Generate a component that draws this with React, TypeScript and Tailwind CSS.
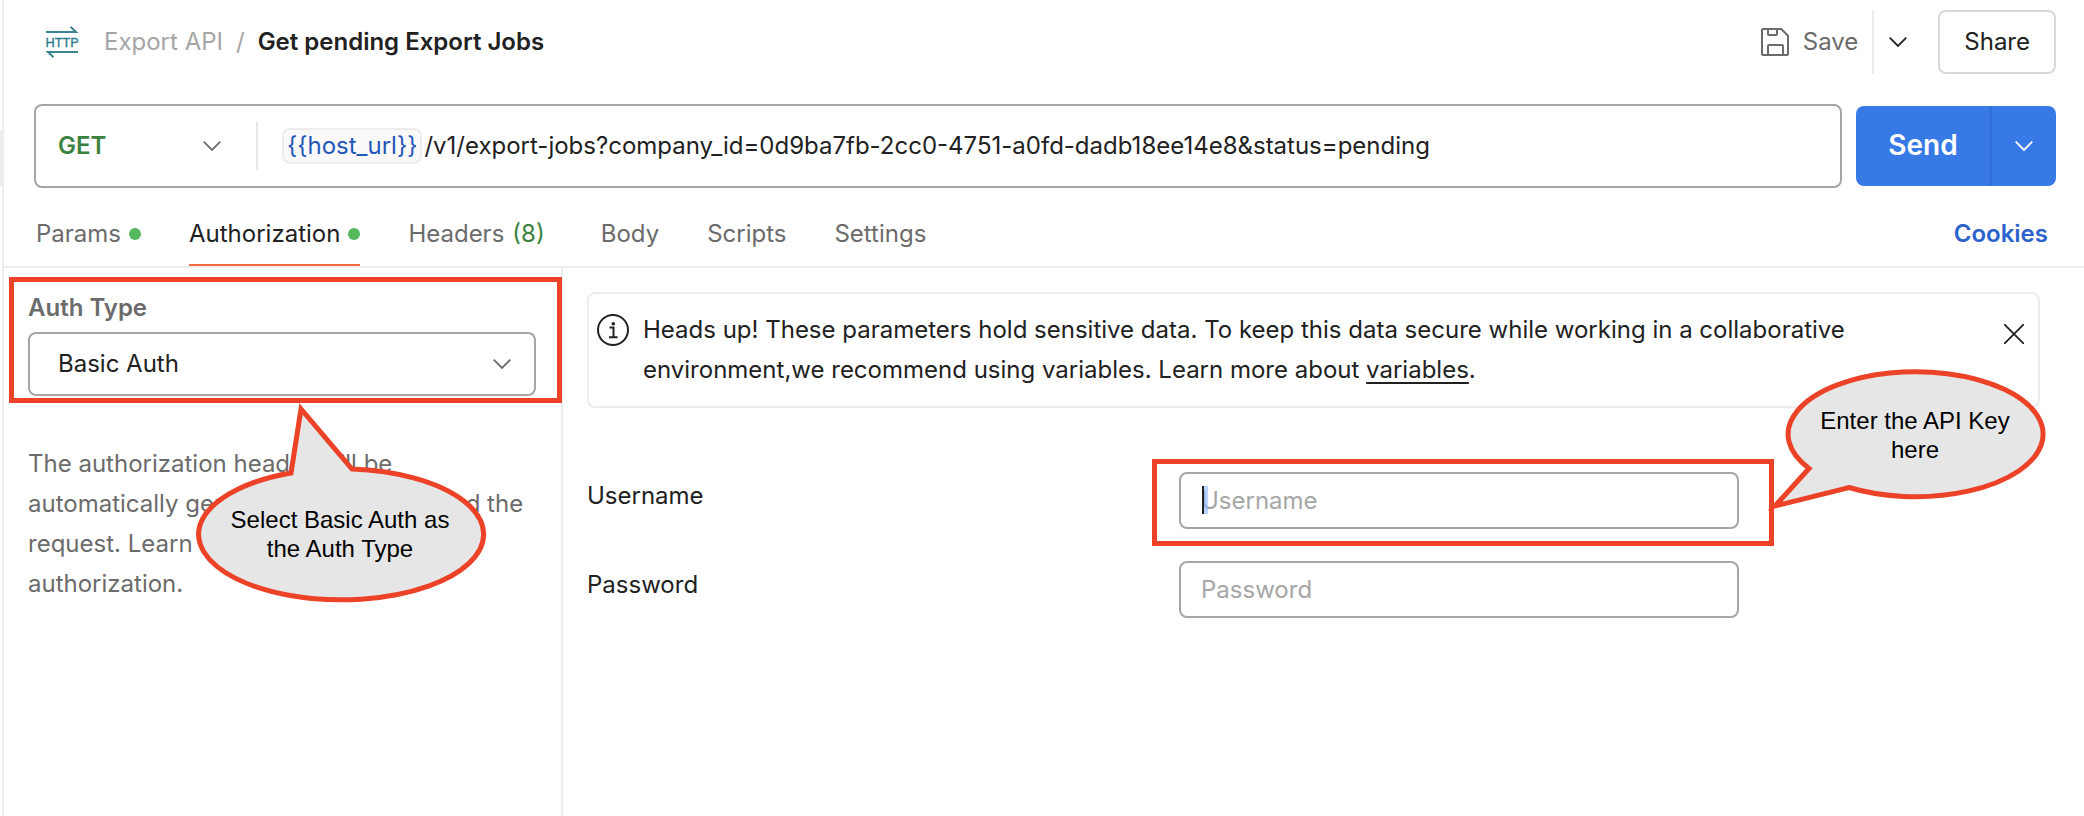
import { useState } from "react";
import type { ReactNode } from "react";

interface Tab {
  label: string;
  dot?: boolean;
  count?: number;
  className: string;
}

const tabs: Tab[] = [
  { label: "Params", dot: true, className: "mr-12" },
  { label: "Authorization", dot: true, className: "mr-12" },
  { label: "Headers", count: 8, className: "mr-14" },
  { label: "Body", className: "mr-12" },
  { label: "Scripts", className: "mr-12" },
  { label: "Settings", className: "" },
];

function Chevron({ className }: { className?: string }) {
  return (
    <svg
      viewBox="0 0 20 12"
      className={`h-3 w-5 shrink-0 ${className ?? ""}`}
      fill="none"
      stroke="currentColor"
      strokeWidth="1.8"
      aria-hidden="true"
    >
      <path d="M1.7 1.7 10 10l8.3-8.3" />
    </svg>
  );
}

function HttpIcon() {
  return (
    <svg viewBox="0 0 34 32" className="h-8 w-[34px] shrink-0 overflow-visible" aria-hidden="true">
      <g fill="none" stroke="#3b8393" strokeWidth="2">
        <path d="M1 6H31L25.5 .8" />
        <path d="M33 26H3L8.5 31.2" />
      </g>
      <text
        x="17"
        y="20.5"
        textAnchor="middle"
        fontSize="13"
        fill="#2c7a8c"
        stroke="#2c7a8c"
        strokeWidth="0.3"
        fontFamily="Roboto, sans-serif"
      >
        HTTP
      </text>
    </svg>
  );
}

function SaveIcon() {
  return (
    <svg
      viewBox="0 0 28 28"
      className="size-7 shrink-0"
      fill="none"
      stroke="currentColor"
      strokeWidth="2"
      aria-hidden="true"
    >
      <path d="M2 1H20.3L27 7.7V26a1 1 0 0 1-1 1H2a1 1 0 0 1-1-1V2a1 1 0 0 1 1-1Z" />
      <path d="M7 1V6a1 1 0 0 0 1 1h7a1 1 0 0 0 1-1V1" />
      <path d="M7 27V18a1 1 0 0 1 1-1H21a1 1 0 0 1 1 1V27" />
    </svg>
  );
}

function InfoIcon() {
  return (
    <svg viewBox="0 0 32 32" className="size-8 shrink-0" fill="none" stroke="#212121" aria-hidden="true">
      <circle cx="16" cy="16" r="15" strokeWidth="2" />
      <path d="M12.5 13.5H16.5V23M12 23.2H20.5" strokeWidth="2" />
      <circle cx="16.3" cy="9.7" r="1.8" fill="#212121" stroke="none" />
    </svg>
  );
}

function Highlight({ className }: { className: string }) {
  return <div className={`pointer-events-none absolute border-5 border-[#ec4227] ${className}`} />;
}

function Callout({
  className,
  width,
  height,
  path,
  textClassName,
  children,
}: {
  className: string;
  width: number;
  height: number;
  path: string;
  textClassName: string;
  children: ReactNode;
}) {
  return (
    <div className={`pointer-events-none absolute z-10 ${className}`}>
      <svg width={width} height={height} viewBox={`0 0 ${width} ${height}`} aria-hidden="true">
        <path d={path} fill="#e6e6e6" stroke="#ec4227" strokeWidth="5" strokeMiterlimit="10" />
      </svg>
      <p
        className={`absolute text-center font-['Liberation_Sans',Arial,sans-serif] text-2xl leading-[29px] text-black ${textClassName}`}
      >
        {children}
      </p>
    </div>
  );
}

export default function App() {
  const [activeTab, setActiveTab] = useState("Authorization");
  const [method, setMethod] = useState("GET");
  const [path, setPath] = useState(
    "/v1/export-jobs?company_id=0d9ba7fb-2cc0-4751-a0fd-dadb18ee14e8&status=pending"
  );
  const [noticeOpen, setNoticeOpen] = useState(true);

  return (
    <div className="flex min-h-screen bg-white font-['Inter',sans-serif] text-2xl text-[#212121] [font-optical-sizing:none]">
      <div className="w-1 shrink-0 border-r-2 border-[#ededed] pt-[130px]">
        <div className="h-14 bg-[#ededed]" />
      </div>

      <main className="flex min-w-0 flex-1 flex-col">
        <header className="flex items-center justify-between pt-2.5 pr-7 pl-[41px]">
          <nav className="flex items-center" aria-label="Breadcrumb">
            <HttpIcon />
            <a href="#export-api" className="ml-[25px] text-[#a6a6a6]">
              Export API
            </a>
            <span className="mx-[13px] text-[#a6a6a6]">/</span>
            <h1 className="font-semibold">Get pending Export Jobs</h1>
          </nav>
          <div className="flex h-16 items-center">
            <button type="button" className="flex items-center gap-3.5 pr-3.5 text-[#6b6b6b]">
              <SaveIcon />
              Save
            </button>
            <button
              type="button"
              aria-label="Save options"
              className="flex h-full items-center border-l-2 border-[#ededed] pr-[30px] pl-3.5"
            >
              <Chevron />
            </button>
            <button type="button" className="h-full rounded-lg border-2 border-[#d9d9d9] px-6">
              Share
            </button>
          </div>
        </header>

        <div className="flex items-center gap-3.5 pt-[30px] pr-7 pl-[30px]">
          <div className="flex h-[84px] min-w-0 flex-1 items-center rounded-lg border-2 border-[#a6a6a6]">
            <div className="relative flex w-[220px] shrink-0 items-center">
              <select
                aria-label="Method"
                value={method}
                onChange={(e) => setMethod(e.target.value)}
                className="w-full appearance-none bg-transparent pl-[22px] font-semibold text-[#3b8241] outline-none"
              >
                <option>GET</option>
                <option>POST</option>
                <option>PUT</option>
                <option>DELETE</option>
              </select>
              <Chevron className="pointer-events-none absolute right-[34px] text-[#6b6b6b]" />
            </div>
            <div className="h-12 w-0.5 bg-[#e6e6e6]" />
            <span className="ml-6 rounded-lg border-2 border-[#ededed] bg-[#f9f9f9] px-[3px] leading-8 text-[#2457b8]">
              {"{{host_url}}"}
            </span>
            <input
              aria-label="Request URL"
              value={path}
              onChange={(e) => setPath(e.target.value)}
              className="min-w-0 flex-1 bg-transparent pl-0.5 outline-none"
            />
          </div>
          <div className="flex h-20 text-white">
            <button
              type="button"
              className="w-[134px] rounded-l-lg bg-[#3779e5] text-[28px] font-semibold"
            >
              Send
            </button>
            <button
              type="button"
              aria-label="Send options"
              className="flex w-[66px] items-center justify-center rounded-r-lg border-l-2 border-[#316fd6] bg-[#3779e5]"
            >
              <Chevron />
            </button>
          </div>
        </div>

        <div className="mt-3.5 flex h-[66px] items-stretch justify-between border-b-2 border-[#ededed] pr-9 pl-8">
          <div className="flex" role="tablist">
            {tabs.map((tab) => (
              <button
                key={tab.label}
                type="button"
                role="tab"
                aria-selected={activeTab === tab.label}
                onClick={() => setActiveTab(tab.label)}
                className={`flex items-center gap-2 border-b-2 pt-0.5 ${tab.className} ${
                  activeTab === tab.label
                    ? "border-[#f26b3a] text-[#212121]"
                    : "border-transparent text-[#6b6b6b]"
                }`}
              >
                {tab.label}
                {tab.dot && <span className="size-3 rounded-full bg-[#55b85f]" />}
                {tab.count && <span className="text-[#3b8241]">({tab.count})</span>}
              </button>
            ))}
          </div>
          <a href="#cookies" className="self-center font-semibold text-[#2b62cc]">
            Cookies
          </a>
        </div>

        <div className="flex flex-1">
          <aside className="w-[559px] shrink-0 border-r-2 border-[#ededed] pt-5 pr-[25px] pl-6">
            <div className="relative">
              <label htmlFor="auth-type" className="block leading-10 font-semibold text-[#6b6b6b]">
                Auth Type
              </label>
              <div className="relative mt-1">
                <select
                  id="auth-type"
                  className="h-16 w-full appearance-none rounded-lg border-2 border-[#a6a6a6] bg-white pl-7 outline-none"
                >
                  <option>Basic Auth</option>
                  <option>Bearer Token</option>
                  <option>No Auth</option>
                </select>
                <Chevron className="pointer-events-none absolute top-[26px] right-6 text-[#6b6b6b]" />
              </div>
              <Highlight className="-top-[11px] -right-[26px] -bottom-[7px] -left-[19px]" />
              <Callout
                className="top-[108px] left-[166px]"
                width={296}
                height={210}
                path="M97 77 107 13 158 73A142.5 65.5 0 1 1 97 77Z"
                textClassName="top-[109px] left-[9px] w-[274px]"
              >
                Select Basic Auth as
                <br />
                the Auth Type
              </Callout>
            </div>
            <p className="mt-12 leading-10 text-[#6b6b6b]">
              The authorization header will be automatically generated when you send the request.
              Learn more about Basic Auth authorization.
            </p>
          </aside>

          <section className="min-w-0 flex-1 pt-6 pr-11 pl-6">
            {noticeOpen && (
              <div className="flex items-start rounded-lg border-2 border-[#ededed] py-4 pr-3.5 pl-2">
                <div className="pt-1">
                  <InfoIcon />
                </div>
                <p className="ml-3.5 max-w-[1240px] leading-10">
                  Heads up! These parameters hold sensitive data. To keep this data secure while
                  working in a collaborative environment,we recommend using variables. Learn more
                  about{" "}
                  <a href="#variables" className="underline underline-offset-4">
                    variables
                  </a>
                  .
                </p>
                <button
                  type="button"
                  aria-label="Dismiss"
                  onClick={() => setNoticeOpen(false)}
                  className="mt-3.5 ml-auto"
                >
                  <svg
                    viewBox="0 0 20 20"
                    className="size-5"
                    fill="none"
                    stroke="#212121"
                    strokeWidth="1.8"
                    aria-hidden="true"
                  >
                    <path d="M0 0 20 20M20 0 0 20" />
                  </svg>
                </button>
              </div>
            )}

            <form className="mt-16 flex flex-col gap-8" onSubmit={(e) => e.preventDefault()}>
              <div className="grid grid-cols-[592fr_560fr_301fr]">
                <label htmlFor="username" className="pt-1 leading-10">
                  Username
                </label>
                <div className="relative">
                  <input
                    id="username"
                    placeholder="Username"
                    className="h-[57px] w-full rounded-lg border-2 border-[#a6a6a6] bg-white px-5 outline-none placeholder:text-[#a6a6a6]"
                  />
                  <div className="pointer-events-none absolute top-3.5 left-[23px] h-7 w-1.5 border-l-2 border-[#212121] bg-[#8cb8ff]/60" />
                  <Highlight className="-top-[13px] -right-[35px] -bottom-[17px] -left-[27px]" />
                  <Callout
                    className="-top-[106px] left-[586px]"
                    width={284}
                    height={160}
                    path="M44 102.5 10 140 84 121.5A127.5 62.5 0 1 0 44 102.5Z"
                    textClassName="top-[40px] left-[50px] w-[200px]"
                  >
                    Enter the API Key
                    <br />
                    here
                  </Callout>
                </div>
              </div>
              <div className="grid grid-cols-[592fr_560fr_301fr]">
                <label htmlFor="password" className="pt-1 leading-10">
                  Password
                </label>
                <input
                  id="password"
                  type="password"
                  placeholder="Password"
                  className="h-[57px] w-full rounded-lg border-2 border-[#a6a6a6] bg-white px-5 outline-none placeholder:text-[#a6a6a6]"
                />
              </div>
            </form>
          </section>
        </div>
      </main>
    </div>
  );
}
